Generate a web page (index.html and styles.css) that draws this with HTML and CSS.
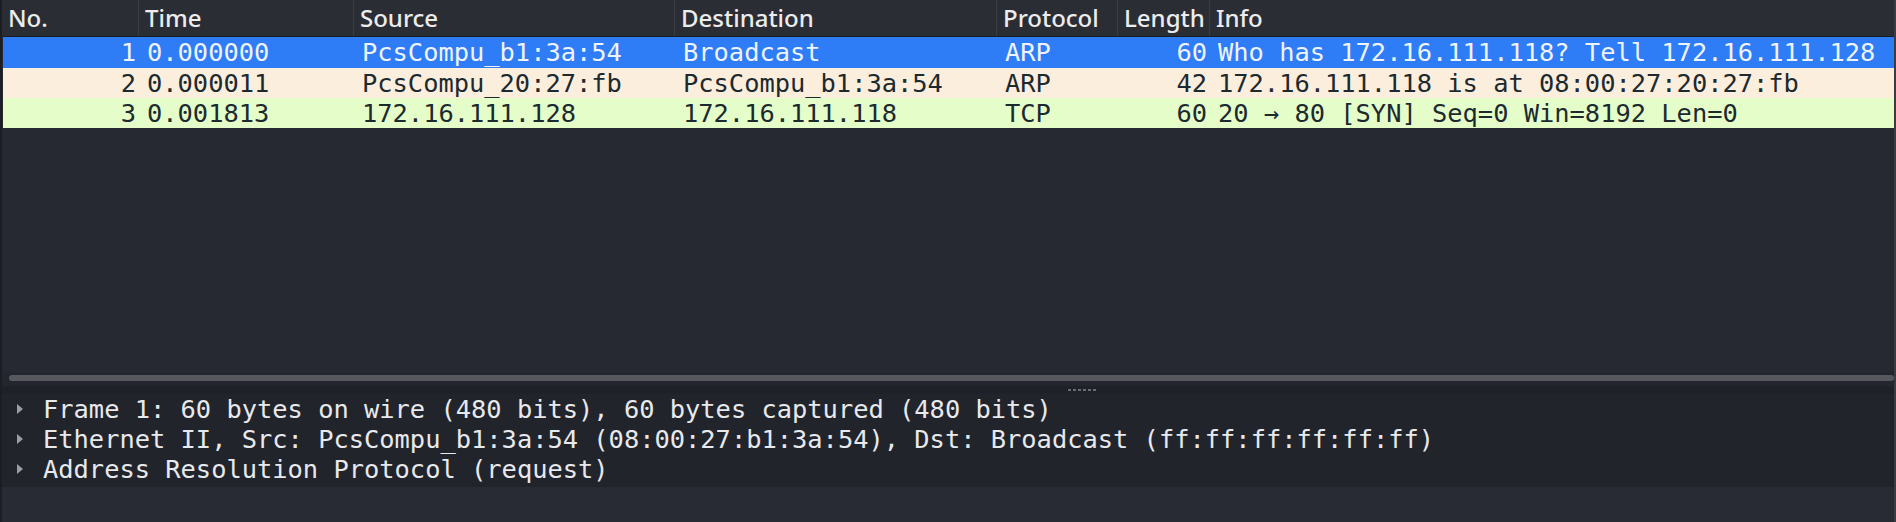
FILE: index.html
```html
<!DOCTYPE html>
<html>
<head>
<meta charset="utf-8">
<link rel="stylesheet" href="styles.css">
</head>
<body>
<div class="app">
  <div class="plist">
    <div class="hdr">
      <div class="hc">No.</div>
      <div class="hc">Time</div>
      <div class="hc">Source</div>
      <div class="hc">Destination</div>
      <div class="hc">Protocol</div>
      <div class="hc">Length</div>
      <div class="hc last">Info</div>
    </div>
    <div class="rows">
      <div class="row sel">
        <div class="c r">1</div><div class="c">0.000000</div><div class="c">PcsCompu_b1:3a:54</div><div class="c">Broadcast</div><div class="c">ARP</div><div class="c r">60</div><div class="c">Who has 172.16.111.118? Tell 172.16.111.128</div>
      </div>
      <div class="row arp">
        <div class="c r">2</div><div class="c">0.000011</div><div class="c">PcsCompu_20:27:fb</div><div class="c">PcsCompu_b1:3a:54</div><div class="c">ARP</div><div class="c r">42</div><div class="c">172.16.111.118 is at 08:00:27:20:27:fb</div>
      </div>
      <div class="row tcp">
        <div class="c r">3</div><div class="c">0.001813</div><div class="c">172.16.111.128</div><div class="c">172.16.111.118</div><div class="c">TCP</div><div class="c r">60</div><div class="c">20 → 80 [SYN] Seq=0 Win=8192 Len=0</div>
      </div>
    </div>
    <div class="hscroll"><div class="thumb"></div></div>
  </div>
  <div class="splitter"><span class="grip"></span></div>
  <div class="details">
    <div class="dl"><span class="arrow"></span>Frame 1: 60 bytes on wire (480 bits), 60 bytes captured (480 bits)</div>
    <div class="dl"><span class="arrow"></span>Ethernet II, Src: PcsCompu_b1:3a:54 (08:00:27:b1:3a:54), Dst: Broadcast (ff:ff:ff:ff:ff:ff)</div>
    <div class="dl"><span class="arrow"></span>Address Resolution Protocol (request)</div>
  </div>
  <div class="rest"></div>
</div>
</body>
</html>
```
FILE: styles.css
```css
* { box-sizing: border-box; }
html, body { margin: 0; padding: 0; }
body {
  width: 1896px;
  height: 522px;
  overflow: hidden;
  background: #282a34;
}
.app {
  display: flex;
  flex-direction: column;
  height: 522px;
  border-left: 2px solid #1c1e24;
  border-right: 2px solid #3a3c44;
}
.plist {
  height: 386px;
  background: #262832;
  display: flex;
  flex-direction: column;
}
.hdr {
  display: grid;
  grid-template-columns: 137px 215px 321px 322px 121px 92px 1fr;
  height: 37px;
  background: #2b2d35;
  border-bottom: 1px solid #1a1c21;
  font-family: "Noto Sans", sans-serif;
  font-size: 24px;
  font-weight: 500;
  color: #ececec;
}
.hc {
  padding-left: 6px;
  line-height: 35px;
  border-right: 1px solid #3b3e46;
  white-space: nowrap;
  overflow: hidden;
}
.hc.last { border-right: none; }
.rows {
  font-family: "DejaVu Sans Mono", monospace;
  font-size: 25.4px;
  flex: 1;
}
.row {
  display: grid;
  grid-template-columns: 137px 215px 321px 322px 121px 92px 1fr;
  height: 30px;
  line-height: 30px;
  margin-left: 1px;
}
.row:first-child { height: 31px; }
.c {
  padding-left: 7px;
  white-space: nowrap;
  overflow: hidden;
}
.c.r { text-align: right; padding-left: 0; padding-right: 4px; }
.sel { background: #2e7cf6; color: #eef3fe; }
.arp { background: #fbeedc; color: #1c2a30; }
.tcp { background: #e4fdc9; color: #1c2a30; }
.hscroll {
  height: 14px;
  padding: 3px 0 4px 7px;
  background: #24262f;
}
.thumb {
  height: 6px;
  border-radius: 3px;
  background: #56585e;
}
.splitter {
  height: 8px;
  background: #1f2128;
  display: flex;
  align-items: center;
  padding-left: 1066px;
}
.grip {
  width: 30px;
  height: 2px;
  background: repeating-linear-gradient(90deg, #6a6c72 0 3px, transparent 3px 5px);
}
.details {
  height: 93px;
  background: #22242c;
  font-family: "DejaVu Sans Mono", monospace;
  font-size: 25.4px;
  color: #e8e9ec;
}
.dl {
  height: 30px;
  line-height: 30px;
  display: flex;
  align-items: center;
  white-space: nowrap;
  padding-left: 15px;
}
.arrow {
  width: 0;
  height: 0;
  border-top: 5px solid transparent;
  border-bottom: 5px solid transparent;
  border-left: 6px solid #9b9da2;
  margin-right: 20px;
}
.rest { flex: 1; background: #282a34; }
```
